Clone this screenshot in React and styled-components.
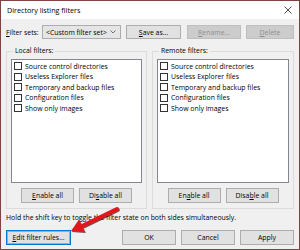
import React from 'react';
import styled, { createGlobalStyle } from 'styled-components';

const Global = createGlobalStyle`
  html, body { margin: 0; padding: 0; background: #fff; }
  * { box-sizing: border-box; }
`;

const Window = styled.div`
  position: relative;
  width: 300px;
  height: 250px;
  border: 1px solid #7e4444;
  background: #f0f0f0;
  display: flex;
  flex-direction: column;
  font-family: "Open Sans", "Noto Sans", sans-serif;
  font-size: 6.9px;
  color: #000;
  overflow: hidden;
`;

const TitleBar = styled.div`
  height: 18px;
  background: #fff;
  display: flex;
  align-items: center;
  justify-content: space-between;
  padding: 0 7px 0 6px;
  font-size: 7.2px;
`;

const Body = styled.div`
  flex: 1;
  display: flex;
  flex-direction: column;
  padding: 6px 5px 0 5px;
`;

const Row = styled.div`
  display: flex;
  align-items: center;
  height: 14px;
`;

const Label = styled.span`
  width: 36px;
  white-space: nowrap;
`;

const Combo = styled.div`
  width: 79px;
  height: 14px;
  display: flex;
  align-items: center;
  justify-content: space-between;
  padding: 0 4px 0 3px;
  background: #e5e5e5;
  border: 1px solid #acacac;
  white-space: nowrap;
`;

const Button = styled.div`
  width: ${p => p.w || 54}px;
  height: ${p => p.h || 14}px;
  margin-left: ${p => p.ml || 0}px;
  display: flex;
  align-items: center;
  justify-content: center;
  white-space: nowrap;
  background: ${p => (p.disabled ? '#cccccc' : '#e1e1e1')};
  color: ${p => (p.disabled ? '#8f8f8f' : '#000')};
  border: 1px solid ${p => (p.disabled ? '#bfbfbf' : p.focus ? '#0078d7' : '#adadad')};
  box-shadow: ${p => (p.focus ? 'inset 0 0 0 1px #7fb6e6' : 'none')};
`;

const Groups = styled.div`
  display: flex;
  gap: 5px;
  margin-top: 6px;
`;

const Group = styled.fieldset`
  margin: 0;
  min-width: 0;
  width: ${p => p.w}px;
  flex: ${p => (p.w ? 'none' : 1)};
  border: 1px solid #dcdcdc;
  padding: 2px 4px 5px 4px;
  display: flex;
  flex-direction: column;
`;

const Legend = styled.legend`
  padding: 0 2px;
  margin-left: 2px;
  line-height: 12px;
`;

const ListBox = styled.div`
  height: 124px;
  background: #fff;
  border: 1px solid #828790;
  padding: 1px 2px;
`;

const Item = styled.div`
  display: flex;
  align-items: center;
  height: 10.5px;
  white-space: nowrap;
`;

const Check = styled.span`
  width: 8px;
  height: 8px;
  border: 1px solid #333;
  background: #fff;
  margin-right: 3px;
  flex: none;
`;

const GroupButtons = styled.div`
  display: flex;
  justify-content: center;
  gap: 5px;
  margin-top: 5px;
`;

const Hint = styled.div`
  margin-top: 4px;
  line-height: 10px;
  white-space: nowrap;
`;

const Footer = styled.div`
  display: flex;
  align-items: center;
  margin-top: 7px;
`;

const Spacer = styled.div`
  flex: 1;
`;

const Overlay = styled.svg`
  position: absolute;
  left: -1px;
  top: -1px;
  pointer-events: none;
`;

const U = styled.u`
  text-decoration-thickness: 0.5px;
  text-underline-offset: 1px;
`;

const items = [
  'Source control directories',
  'Useless Explorer files',
  'Temporary and backup files',
  'Configuration files',
  'Show only images',
];

const FilterGroup = ({ title, w, en, dis }) => (
  <Group w={w}>
    <Legend>{title}</Legend>
    <ListBox>
      {items.map(t => (
        <Item key={t}>
          <Check />
          {t}
        </Item>
      ))}
    </ListBox>
    <GroupButtons>
      <Button w={53} h={15}>{en}</Button>
      <Button w={53} h={15}>{dis}</Button>
    </GroupButtons>
  </Group>
);

export default function App() {
  return (
    <Window>
      <Global />
      <TitleBar>
        <span>Directory listing filters</span>
        <svg width="8" height="8" viewBox="0 0 8 8">
          <path d="M0.5 0.5L7.5 7.5M7.5 0.5L0.5 7.5" stroke="#222" strokeWidth="0.8" />
        </svg>
      </TitleBar>
      <Body>
        <Row>
          <Label><U>F</U>ilter sets:</Label>
          <Combo>
            <span>&lt;Custom filter set&gt;</span>
            <svg width="6" height="4" viewBox="0 0 6 4">
              <path d="M0.5 0.5L3 3L5.5 0.5" fill="none" stroke="#444" strokeWidth="0.7" />
            </svg>
          </Combo>
          <Button ml={5} w={55}><U>S</U>ave as...</Button>
          <Button ml={6} w={54} disabled><U>R</U>ename...</Button>
          <Button ml={5} w={48} disabled><U>D</U>elete</Button>
        </Row>
        <Groups>
          <FilterGroup
            title="Local filters:"
            w={141}
            en={<><U>E</U>nable all</>}
            dis={<>Di<U>s</U>able all</>}
          />
          <FilterGroup
            title="Remote filters:"
            en={<>En<U>a</U>ble all</>}
            dis={<>Disa<U>b</U>le all</>}
          />
        </Groups>
        <Hint>Hold the shift key to toggle the filter state on both sides simultaneously.</Hint>
        <Footer>
          <Button w={65} h={15} focus><U>E</U>dit filter rules...</Button>
          <Spacer />
          <Button w={54} h={15}>OK</Button>
          <Button w={54} h={15} ml={5}>Cancel</Button>
          <Button w={54} h={15} ml={5}>Apply</Button>
        </Footer>
      </Body>
      <Overlay width="300" height="250" viewBox="0 0 300 250">
        <defs>
          <filter id="sh" x="-20%" y="-20%" width="140%" height="140%">
            <feDropShadow dx="0.8" dy="1" stdDeviation="0.6" floodColor="#3a0000" floodOpacity="0.7" />
          </filter>
        </defs>
        <g filter="url(#sh)">
          <path d="M117 209L83 225.5" stroke="#e3161c" strokeWidth="4" strokeLinecap="round" />
          <path d="M71 231L79 219.5L85 232Z" fill="#e3161c" />
        </g>
      </Overlay>
    </Window>
  );
}
